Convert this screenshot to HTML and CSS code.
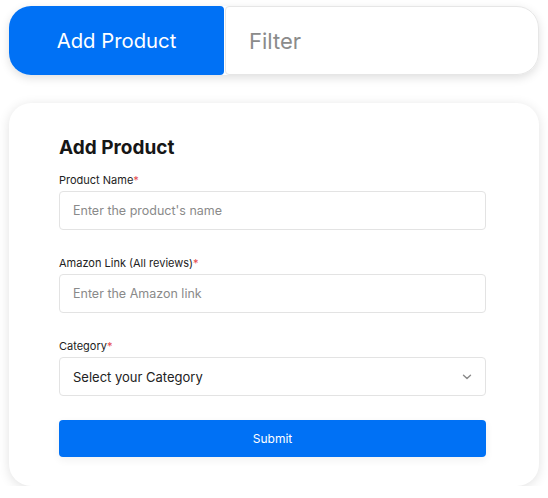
FILE: index.html
```html
<!DOCTYPE html>
<html>
<head>
<meta charset="utf-8">
<link rel="stylesheet" href="styles.css">
</head>
<body>
<div class="page">
  <div class="tabs">
    <div class="tab tab-active">Add Product</div>
    <div class="tab tab-filter">Filter</div>
  </div>
  <div class="card">
    <h1 class="title">Add Product</h1>
    <div class="field">
      <label class="label">Product Name<span class="req">*</span></label>
      <div class="input"><span class="ph">Enter the product's name</span></div>
    </div>
    <div class="field">
      <label class="label">Amazon Link (All reviews)<span class="req">*</span></label>
      <div class="input"><span class="ph">Enter the Amazon link</span></div>
    </div>
    <div class="field">
      <label class="label">Category<span class="req">*</span></label>
      <div class="input select"><span class="val">Select your Category</span>
        <svg class="chev" width="10" height="6" viewBox="0 0 10 6"><path d="M1.5 1.2 L5 4.6 L8.5 1.2" fill="none" stroke="#8a8a8a" stroke-width="1.4" stroke-linecap="round" stroke-linejoin="round"/></svg>
      </div>
    </div>
    <div class="submit">Submit</div>
  </div>
</div>
</body>
</html>
```
FILE: styles.css
```css
* { box-sizing: border-box; }
body { margin: 0; background: #fff; font-family: Inter, "Noto Sans", sans-serif; }
.page { padding: 6px 9px 0 9px; }
.tabs {
  display: flex;
  height: 69px;
  border-radius: 22px;
  box-shadow: 0 3px 10px rgba(0,0,0,0.13);
}
.tab { display: flex; align-items: center; font-size: 20px; }
.tab-active {
  width: 215px;
  background: #0071f5;
  color: #fff;
  justify-content: center;
  font-size: 20.3px;
  border-radius: 22px 4px 4px 22px;
}
.tab-filter {
  flex: 1;
  margin-left: 1px;
  background: #fff;
  color: #8b8b8b;
  padding-left: 23px;
  font-size: 22px;
  border: 1px solid #e6e6e6;
  border-radius: 4px 22px 22px 4px;
}
.card {
  margin-top: 28px;
  background: #fff;
  border-radius: 22px;
  box-shadow: 0 2px 12px rgba(0,0,0,0.12);
  padding: 33px 53px 29px 50px;
}
.title {
  margin: 0 0 13px 0;
  font-size: 19px;
  line-height: 24px;
  font-weight: 700;
  color: #161616;
}
.field { display: flex; flex-direction: column; gap: 4px; margin-bottom: 26px; }
.field:nth-of-type(3) { margin-bottom: 24px; }
.label { font-size: 11px; line-height: 14px; color: #222; font-weight: 400; }
.req { color: #e5484d; }
.input {
  height: 39px;
  border: 1px solid #e3e3e3;
  border-radius: 4px;
  display: flex;
  align-items: center;
  padding: 0 13px;
  font-size: 12.5px;
}
.ph { color: #8a8a8a; }
.select { justify-content: space-between; padding-right: 13px; }
.val { color: #222; font-size: 13px; }
.submit {
  height: 37px;
  background: #0071f5;
  color: #fff;
  border-radius: 4px;
  display: flex;
  align-items: center;
  justify-content: center;
  font-size: 12px;
  box-shadow: 0 3px 8px rgba(0,0,0,0.06);
}
```
